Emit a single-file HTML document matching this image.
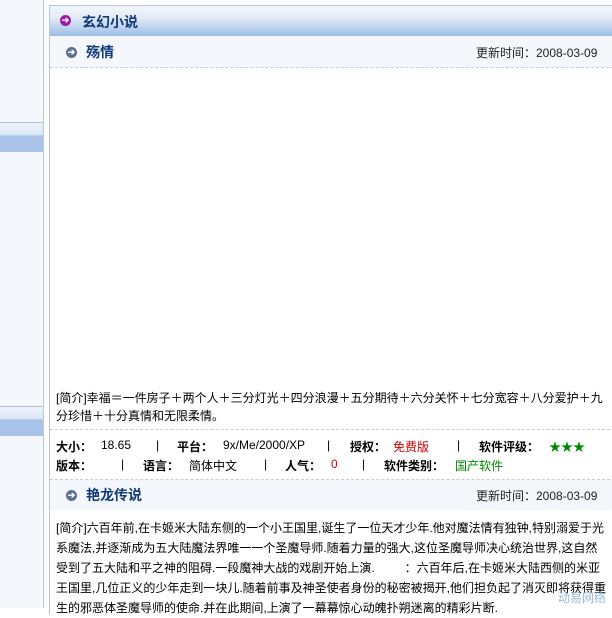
<!DOCTYPE html>
<html><head><meta charset="utf-8"><style>
*{margin:0;padding:0;box-sizing:border-box}
body{width:612px;height:608px;overflow:hidden;background:#fff;font-family:"Liberation Sans","Noto Sans CJK SC","WenQuanYi Zen Hei",sans-serif;font-size:12px;color:#000;position:relative}
.side{position:absolute;left:0;top:0;width:44px;height:608px;background:#f4f7fb;border-right:1px solid #b9c9da}
.band{position:absolute;left:0;width:43px;height:30px;border-top:1px solid #aebdd0;background:linear-gradient(#eef3fa 0,#dbe6f5 40%,#a9c3e8 45%,#a9c3e8 100%)}
.main{position:absolute;left:49px;top:5px;width:570px;height:610px;border-left:1px solid #b5c6d8;border-top:1px solid #b5c6d8}
.hd{height:30px;background:linear-gradient(#f4f7fc,#e2eaf6 40%,#9dbde5);position:relative}
.hd b{position:absolute;left:32px;top:6px;font-size:14px;color:#123a78}
.ic{position:absolute;width:11px;height:11px;border-radius:50%;color:#fff;font-size:9px;line-height:11px;text-align:center;font-weight:bold}
.sub{height:32px;background:#f4f7fc;border-bottom:1px dashed #ccd;position:relative}
.sub b{position:absolute;left:36px;top:6px;font-size:14px;color:#123a78}
.sub span{position:absolute;left:426px;top:8px;font-size:12px;color:#222}
.t{position:absolute;left:6px;width:550px;line-height:18px;font-size:12px}
.r{position:absolute;left:0;height:18px;width:560px}
.r span{position:absolute;top:0;white-space:nowrap}
.k{font-weight:bold}
</style></head><body>
<div class="side"><div class="band" style="top:122px"></div><div class="band" style="top:406px"></div></div>
<div class="main">
<div class="hd"><div class="ic" style="left:10px;top:9px;background:#9a1aa8">➔</div><b>玄幻小说</b></div>
<div class="sub"><div class="ic" style="left:16px;top:11px;background:#5a6f93">➔</div><b>殇情</b><span>更新时间：2008-03-09</span></div>
<div class="t" style="top:383px">[简介]幸福＝一件房子＋两个人＋三分灯光＋四分浪漫＋五分期待＋六分关怀＋七分宽容＋八分爱护＋九分珍惜＋十分真情和无限柔情。</div>
<div style="position:absolute;left:0;top:423px;width:560px;border-top:1px dashed #ccc"></div>
<div class="r" style="top:432px"><span class="k" style="left:6px">大小：</span><span style="left:51px">18.65</span><span style="left:106px">|</span><span class="k" style="left:127px">平台：</span><span style="left:173px">9x/Me/2000/XP</span><span style="left:277px">|</span><span class="k" style="left:300px">授权：</span><span style="left:343px;color:#c00">免费版</span><span style="left:407px">|</span><span class="k" style="left:429px">软件评级：</span><span style="left:499px;color:#080">★★★</span></div>
<div class="r" style="top:451px"><span class="k" style="left:6px">版本：</span><span style="left:71px">|</span><span class="k" style="left:93px">语言：</span><span style="left:139px">简体中文</span><span style="left:214px">|</span><span class="k" style="left:235px">人气：</span><span style="left:281px;color:#c00">0</span><span style="left:312px">|</span><span class="k" style="left:334px">软件类别：</span><span style="left:405px;color:#080">国产软件</span></div>
<div style="position:absolute;left:0;top:473px;width:560px;border-top:1px dashed #ccc"></div>
<div class="sub" style="position:absolute;top:474px;width:570px;height:30px;border-bottom:none"><div class="ic" style="left:16px;top:10px;background:#5a6f93">➔</div><b style="top:5px">艳龙传说</b><span style="top:7px">更新时间：2008-03-09</span></div>
<div class="t" style="top:512px;line-height:20px">[简介]六百年前,在卡姬米大陆东侧的一个小王国里,诞生了一位天才少年.他对魔法情有独钟,特别溺爱于光系魔法,并逐渐成为五大陆魔法界唯一一个圣魔导师.随着力量的强大,这位圣魔导师决心统治世界,这自然受到了五大陆和平之神的阻碍.一段魔神大战的戏剧开始上演. &nbsp; &nbsp; &nbsp; &nbsp; ：六百年后,在卡姬米大陆西侧的米亚王国里,几位正义的少年走到一块儿.随着前事及神圣使者身份的秘密被揭开,他们担负起了消灭即将获得重生的邪恶体圣魔导师的使命.并在此期间,上演了一幕幕惊心动魄扑朔迷离的精彩片断.</div>
</div>
<div style="position:absolute;right:6px;bottom:2px;color:#9ab8d8;font-size:12px">动易网络</div>
</body></html>
